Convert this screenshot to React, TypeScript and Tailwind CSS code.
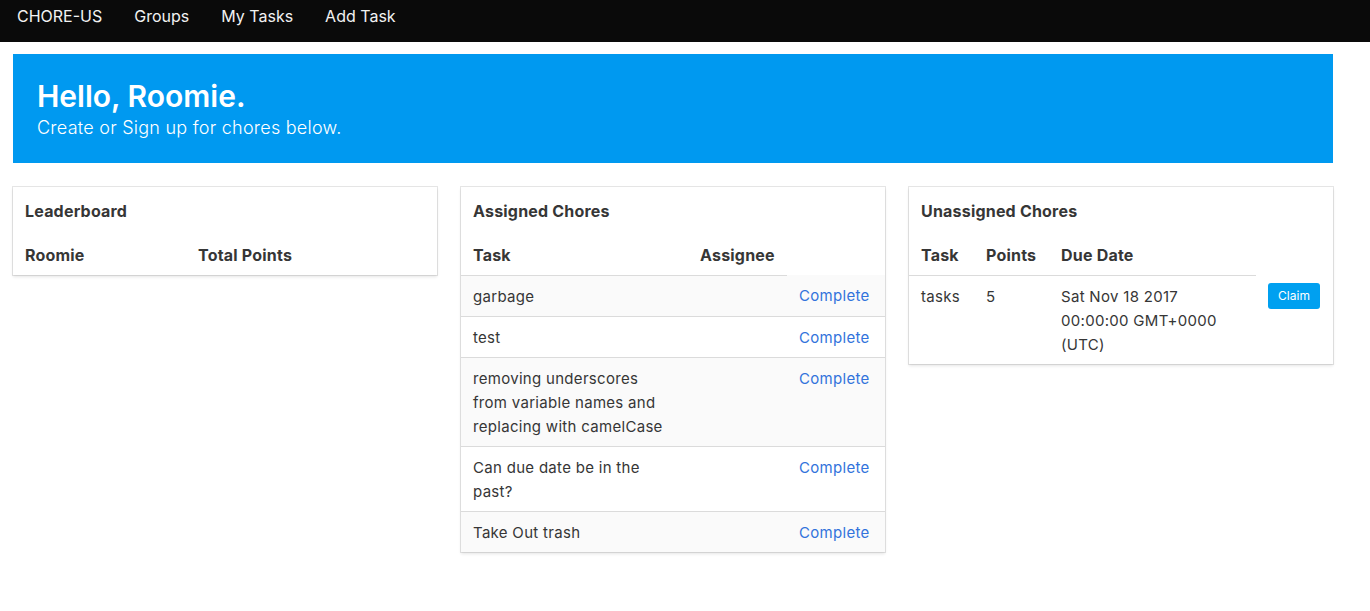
import React from "react";

interface Chore {
    task: string;
    assignee: string;
}

const assigned: Chore[] = [
    { task: "garbage", assignee: "" },
    { task: "test", assignee: "" },
    { task: "removing underscores from variable names and replacing with camelCase", assignee: "" },
    { task: "Can due date be in the past?", assignee: "" },
    { task: "Take Out trash", assignee: "" },
];

function Card({ title, children }: { title: string; children: React.ReactNode }) {
    return (
        <div className="bg-white shadow-[0_2px_3px_rgba(10,10,10,0.1),0_0_0_1px_rgba(10,10,10,0.1)]">
            <div className="h-12 px-3 flex items-center font-bold text-[16px] tracking-[0.2px] text-[#363636]">{title}</div>
            {children}
        </div>
    );
}

export default function App() {
    return (
        <div className="min-h-screen bg-white text-[#363636] font-['Inter',sans-serif] text-[15px] tracking-[0.3px]">
            <nav className="h-[42px] bg-[#0a0a0a] flex items-center pb-[10px] text-[#f2f2f2] text-[16px] tracking-normal">
                <a className="pl-[17px] pr-4">CHORE-US</a>
                <a className="px-4">Groups</a>
                <a className="px-4">My Tasks</a>
                <a className="px-4">Add Task</a>
            </nav>
            <main className="pl-[13px] pt-3 w-[1333px]">
                <section className="h-[109px] bg-[#0099f0] px-6 pt-6 text-white">
                    <h1 className="text-[30px] font-semibold leading-[36px] tracking-normal">Hello, Roomie.</h1>
                    <p className="mt-0.5 text-[18px] leading-6 font-light tracking-[0.25px]">Create or Sign up for chores below.</p>
                </section>
                <div className="mt-6 grid grid-cols-3 gap-6 items-start">
                    <Card title="Leaderboard">
                        <table className="table-fixed border-collapse text-left">
                            <thead>
                                <tr className="h-10 text-[16px] tracking-[0.2px]">
                                    <th className="w-[173px] px-3 font-bold">Roomie</th>
                                    <th className="w-[173px] px-3 font-bold">Total Points</th>
                                </tr>
                            </thead>
                        </table>
                    </Card>
                    <Card title="Assigned Chores">
                        <table className="w-full table-fixed border-collapse text-left">
                            <colgroup>
                                <col className="w-[227px]" />
                                <col className="w-[99px]" />
                                <col />
                            </colgroup>
                            <thead>
                                <tr className="h-10 text-[16px] tracking-[0.2px]">
                                    <th className="px-3 font-bold border-b border-[#dbdbdb]">Task</th>
                                    <th className="px-3 font-bold border-b border-[#dbdbdb]">Assignee</th>
                                    <th></th>
                                </tr>
                            </thead>
                            <tbody>
                                {assigned.map((c, i) => (
                                    <tr key={i} className={`${i % 2 === 0 ? "bg-[#fafafa]" : "bg-white"} ${i < assigned.length - 1 ? "border-b border-[#dbdbdb]" : ""}`}>
                                        <td className="px-3 pt-[9px] pb-[7px] align-top leading-6">{c.task}</td>
                                        <td className="px-3 pt-[9px] pb-[7px] align-top leading-6">{c.assignee}</td>
                                        <td className="px-3 pt-[9px] pb-[7px] align-top leading-6">
                                            <a className="text-[#3273dc]">Complete</a>
                                        </td>
                                    </tr>
                                ))}
                            </tbody>
                        </table>
                    </Card>
                    <Card title="Unassigned Chores">
                        <table className="w-full table-fixed border-collapse text-left">
                            <colgroup>
                                <col className="w-[65px]" />
                                <col className="w-[75px]" />
                                <col className="w-[207px]" />
                                <col />
                            </colgroup>
                            <thead>
                                <tr className="h-10 text-[16px] tracking-[0.2px]">
                                    <th className="px-3 font-bold border-b border-[#dbdbdb]">Task</th>
                                    <th className="px-3 font-bold border-b border-[#dbdbdb]">Points</th>
                                    <th className="px-3 font-bold border-b border-[#dbdbdb]">Due Date</th>
                                    <th></th>
                                </tr>
                            </thead>
                            <tbody>
                                <tr>
                                    <td className="px-3 pt-[9px] pb-[7px] align-top leading-6">tasks</td>
                                    <td className="px-3 pt-[9px] pb-[7px] align-top leading-6">5</td>
                                    <td className="px-3 pt-[9px] pb-[7px] align-top leading-6">Sat Nov 18 2017 00:00:00 GMT+0000 (UTC)</td>
                                    <td className="px-3 py-2 align-top">
                                        <button className="h-[26px] w-[52px] rounded-[3px] bg-[#00a0f0] text-white text-[12px] tracking-normal">Claim</button>
                                    </td>
                                </tr>
                            </tbody>
                        </table>
                    </Card>
                </div>
            </main>
        </div>
    );
}
